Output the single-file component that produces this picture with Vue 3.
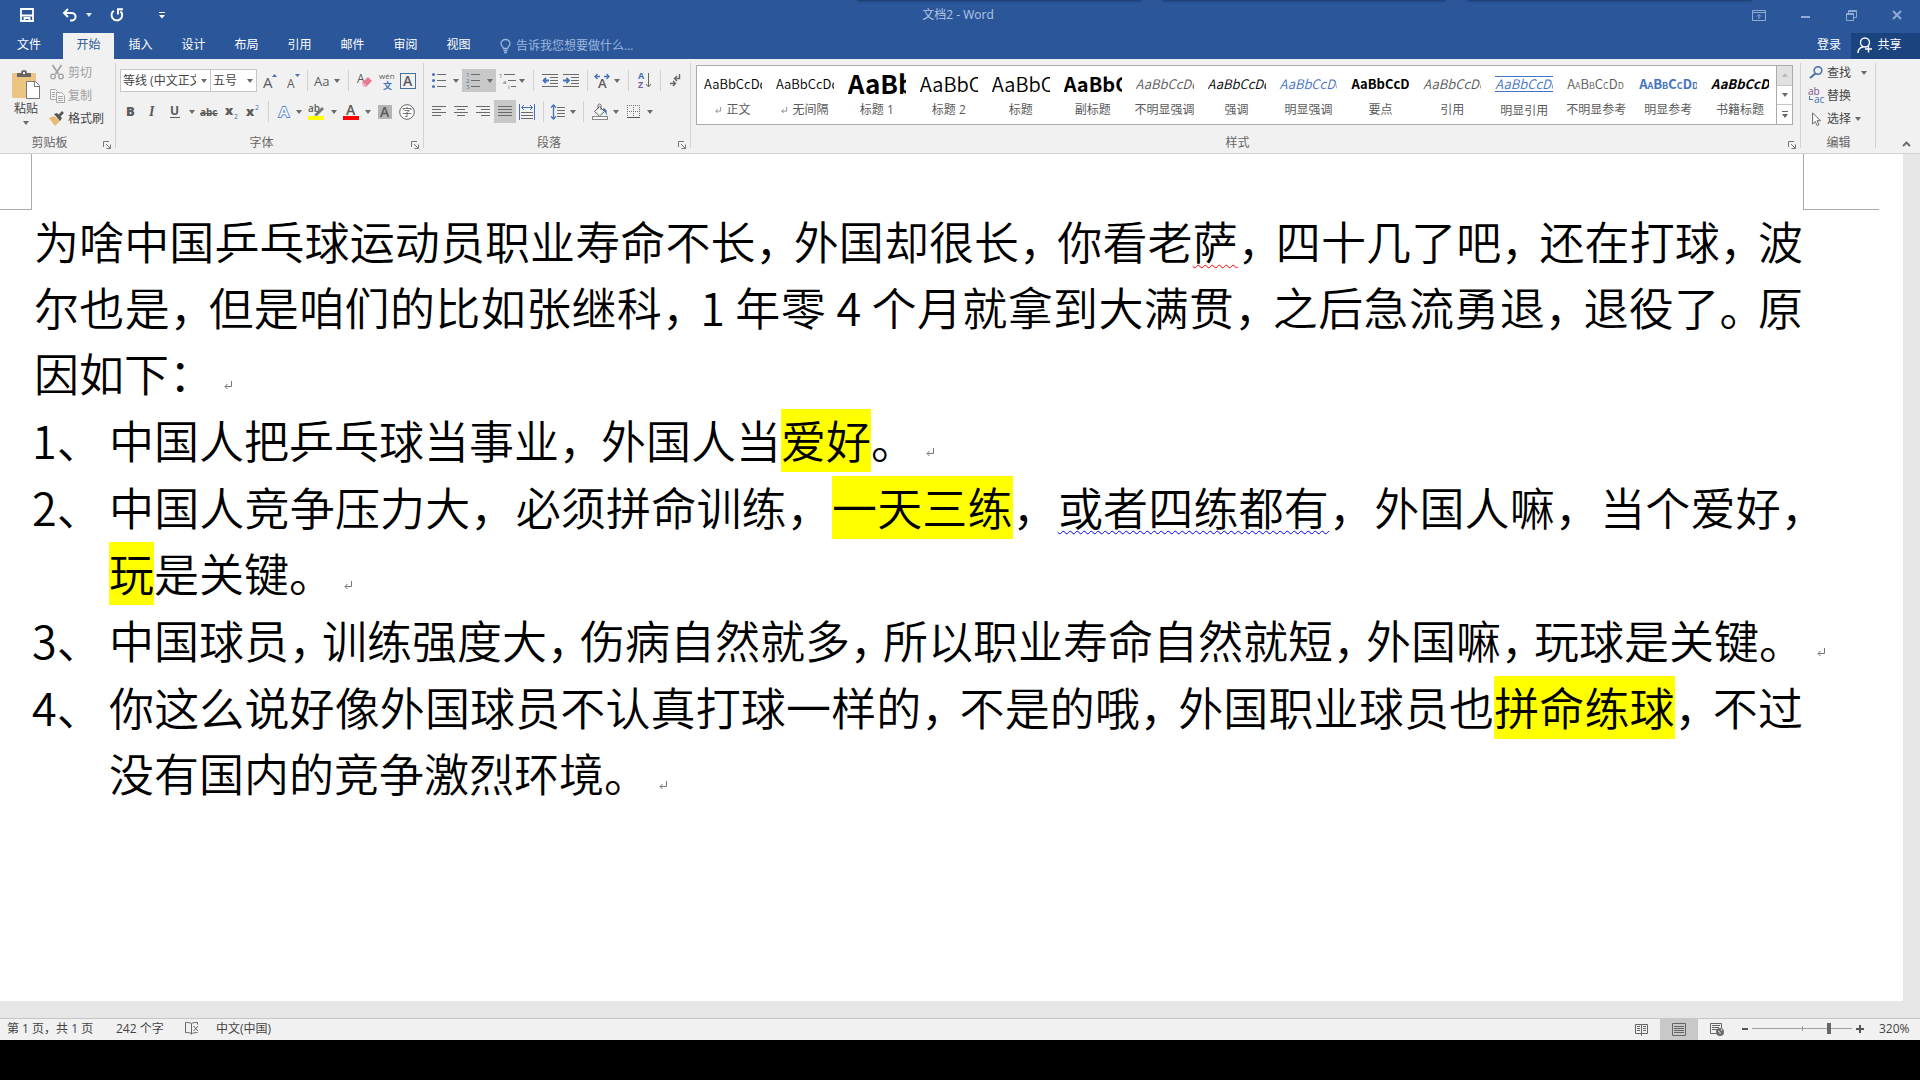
<script setup>
import { ref } from 'vue'

const ink = '#5a5a5a'
const blue = '#4472b4'

const line = (x1, x2, y) => `<path d="M${x1} ${y}.5H${x2}" stroke="#6a6a6a" fill="none"/>`
const letter = (t, x, y, size, extra = '') =>
  `<text x="${x}" y="${y}" font-size="${size}" font-family="'Open Sans','Noto Sans CJK SC',sans-serif" fill="${ink}" ${extra}>${t}</text>`

const icons = {
  arrow: { w: 6, h: 4, body: `<path d="M0 0h6L3 4z" fill="#6a6a6a"/>` },
  sep: { w: 1, h: 21, body: `<path d="M.5 0v21" stroke="#d2d2d2"/>` },
  launcher: { w: 8, h: 8, body: `<path d="M.5 6V.5H6M3 3l4 4M7.500 3.500v4h-4" stroke="#777" fill="none"/>` },
  save: { w: 14, h: 14, body: `<path d="M1 1h12v12H1zM1 7.500h12M4.500 13V10h5v3" stroke="#fff" stroke-width="1.800" fill="none"/>` },
  undo: { w: 15, h: 14, body: `<path d="M2 5h7.500a4 3.700 0 0 1 0 7.500H8M6 1L2 5l4 4" stroke="#fff" stroke-width="2" fill="none"/>` },
  redo: { w: 14, h: 14, body: `<path d="M3.800 2.800A5.300 5.300 0 1 0 10.500 3.300M7 1.200h6M8 1v5.500" stroke="#fff" stroke-width="1.900" fill="none"/>` },
  custom: { w: 6, h: 7, body: `<path d="M0 .5h6" stroke="#fff"/><path d="M0 3h6L3 6.500z" fill="#fff"/>` },
  whiteArrow: { w: 6, h: 4, body: `<path d="M0 0h6L3 4z" fill="#dfe7f3"/>` },
  ribbonOpts: { w: 14, h: 11, body: `<path d="M.5.5h13v10H.5zM.5 2.500h13M7 9V5M5 6.500L7 4.500l2 2" stroke="#8fabd6" fill="none"/>` },
  min: { w: 9, h: 11, body: `<path d="M0 7h9" stroke="#8fabd6" stroke-width="2"/>` },
  restore: { w: 11, h: 11, body: `<path d="M.5 3.500h7v7h-7zM.5 4.500h7M2.500 3V.5h8v7H8M3 1.500h7" stroke="#8fabd6" fill="none"/>` },
  close: { w: 10, h: 10, body: `<path d="M1 1l8 8M9 1L1 9" stroke="#8fabd6" stroke-width="2"/>` },
  bulb: { w: 11, h: 15, body: `<path d="M3.500 9.500C3.500 8 1 7 1 4.800A4.500 4.300 0 0 1 10 4.800C10 7 7.500 8 7.500 9.500zM3.500 11.500h4M4 13.500h3" stroke="#9db6de" stroke-width="1.300" fill="none"/>` },
  share: { w: 16, h: 16, body: `<circle cx="8" cy="5.500" r="4.500" stroke="#fff" stroke-width="1.400" fill="none"/><path d="M1 16c0-3 2-5.500 5-6M11.500 8.500v7M8 12h7" stroke="#fff" stroke-width="1.400" fill="none"/>` },
  paste: { w: 30, h: 32, body: `<rect x="1" y="4" width="24" height="25" rx="1" fill="#ecc583"/><path d="M6 8V4h4a3 3 0 0 1 6 0h4v4z" fill="#666"/><circle cx="13" cy="4" r="1.200" fill="#eee"/><path d="M15.500 12.500h9l4 4v13h-13z" fill="#fff" stroke="#777"/><path d="M23.500 12.500v5h5" stroke="#777" fill="none"/>` },
  cut: { w: 14, h: 15, body: `<path d="M2.500 0l6 9M11.500 0l-6 9" stroke="#a0a0a0" stroke-width="1.700"/><circle cx="3" cy="11.500" r="2.300" stroke="#a0a0a0" stroke-width="1.300" fill="none"/><circle cx="11" cy="11.500" r="2.300" stroke="#a0a0a0" stroke-width="1.300" fill="none"/>` },
  copy: { w: 15, h: 14, body: `<path d="M6 10.500H.5V.5h5l2 2M2 3.500h3M2 5.500h3M2 7.500h3" stroke="#a8a8a8" fill="none"/><path d="M6.500 3.500h5l3 3v7h-8zM8 7.500h5M8 9.500h5M8 11.500h5" stroke="#a8a8a8" fill="#f5f5f5"/>` },
  brush: { w: 16, h: 15, body: `<path d="M0 7l5-2 6 5-5 5z" fill="#e8bb73"/><path d="M5 3l3-1 5 5-2 3z" fill="#555"/><path d="M10 5l4-4" stroke="#555" stroke-width="2.500"/>` },
  growA: { w: 15, h: 16, body: letter('A', 0, 15, 15) + `<path d="M9 4l2.500-3L14 4z" fill="${blue}"/>` },
  shrinkA: { w: 14, h: 15, body: letter('A', 0, 15, 12) + `<path d="M8 1h5l-2.500 3z" fill="${blue}"/>` },
  aa: { w: 16, h: 14, body: letter('Aa', 0, 12, 13) },
  eraser: { w: 15, h: 15, body: letter('A', 0, 10, 12) + `<path d="M5 10l6-6 4 4-6 6H7z" fill="#e8798f"/><path d="M5 10l2 4h2l1-1-4-4z" fill="#f3b3bd"/>` },
  wen: { w: 16, h: 18, body: letter('wén', 0, 7, 8) + letter('文', 4, 17, 9, `style="fill:${blue};font-weight:700"`) },
  boxA: { w: 16, h: 16, body: `<rect x=".5" y=".5" width="15" height="15" stroke="#41719c" fill="none"/>` + letter('A', 3, 13, 14, 'font-weight="600"') },
  bold: { w: 9, h: 13, body: letter('B', 0, 11, 13, 'font-weight="800"') },
  italic: { w: 9, h: 13, body: `<text x="1" y="11" font-size="14" font-family="'Liberation Serif',serif" font-style="italic" font-weight="700" fill="${ink}">I</text>` },
  underline: { w: 10, h: 14, body: letter('U', 0, 10, 12, 'font-weight="700"') + `<path d="M0 12.500h10" stroke="${ink}"/>` },
  strike: { w: 18, h: 12, body: letter('abc', 0, 10, 10, 'font-weight="700"') + `<path d="M0 7.500h18" stroke="${ink}"/>` },
  sub: { w: 13, h: 14, body: letter('x', 0, 10, 13, 'font-weight="800"') + letter('2', 9, 14, 7, `style="fill:${blue}"`) },
  sup: { w: 13, h: 16, body: letter('x', 0, 12, 13, 'font-weight="800"') + letter('2', 9, 6, 7, `style="fill:${blue}"`) },
  effectA: { w: 14, h: 15, body: `<text x="2" y="13" font-size="15" font-family="'Open Sans',sans-serif" font-weight="600" fill="#fff" stroke="#5b8bd0" stroke-width="2" paint-order="stroke">A</text>` },
  marker: { w: 17, h: 18, body: letter('ab', 0, 9, 10, 'font-weight="600"') + `<path d="M6 12l8-8 2 2-7 7z" fill="#777"/><rect x="0" y="13" width="16" height="4" fill="#ff0"/>` },
  colorA: { w: 16, h: 16, body: letter('A', 3, 11, 14, 'font-weight="600"') + `<rect y="12" width="16" height="4" fill="#f00"/>` },
  shadeA: { w: 14, h: 14, body: `<rect width="14" height="14" fill="#b4b4b4"/>` + letter('A', 2, 12, 14, 'font-weight="600"') },
  circleZi: { w: 16, h: 16, body: `<circle cx="8" cy="8" r="7.300" stroke="#666" fill="#fff"/>` + letter('字', 3, 12, 10) },
  bullets: { w: 14, h: 15, body: [1, 7, 13].map(y => `<circle cx="1.500" cy="${y + .5}" r="1.500" fill="${blue}"/>` + line(5, 14, y)).join('') },
  numbers: { w: 14, h: 17, body: [1, 2, 3].map((n, i) => letter(n, 0, 5 + i * 6, 6, `style="fill:${blue}"`) + line(5, 14, 2 + i * 6)).join('') },
  multi: { w: 17, h: 16, body: letter('1', 0, 5, 6) + letter('a', 4, 11, 6) + letter('i', 9, 16, 6) + line(5, 16, 1) + line(9, 17, 7) + line(12, 17, 13) },
  outdent: { w: 16, h: 13, body: line(0, 16, 0) + line(8, 16, 3) + line(8, 16, 6) + line(8, 16, 9) + line(0, 16, 12) + `<path d="M7 6.500H2M4 4L1.500 6.500 4 9" stroke="${blue}" stroke-width="1.800" fill="none"/>` },
  indent: { w: 16, h: 13, body: line(0, 16, 0) + line(8, 16, 3) + line(8, 16, 6) + line(8, 16, 9) + line(0, 16, 12) + `<path d="M0 6.500h5M3.500 4L6 6.500 3.500 9" stroke="${blue}" stroke-width="1.800" fill="none"/>` },
  asian: { w: 16, h: 14, body: letter('A', 4, 14, 13, 'font-weight="600"') + `<path d="M6 2.500H1M3.500 0L1 2.500 3.500 5M10 2.500h5M12.500 0L15 2.500 12.500 5" stroke="${blue}" stroke-width="1.300" fill="none"/>` },
  sort: { w: 14, h: 17, body: letter('A', 0, 7, 9, `style="fill:${blue};font-weight:700"`) + letter('Z', 0, 16, 9, 'style="fill:#8064a2;font-weight:700"') + `<path d="M10.500 1v14M8 12l2.500 3 2.500-3" stroke="#666" fill="none"/>` },
  marks: { w: 12, h: 14, body: `<path d="M9.500 0v4.500H5M7 2L4.500 4.500 7 7M0 9.500h5M3 7L5.500 9.500 3 12" stroke="#666" stroke-width="1.400" fill="none"/>` },
  left: { w: 14, h: 13, body: line(0, 14, 1) + line(0, 9, 4) + line(0, 14, 7) + line(0, 9, 10) },
  center: { w: 14, h: 13, body: line(0, 14, 1) + line(3, 11, 4) + line(0, 14, 7) + line(3, 11, 10) },
  right: { w: 14, h: 13, body: line(0, 14, 1) + line(5, 14, 4) + line(0, 14, 7) + line(5, 14, 10) },
  justify: { w: 14, h: 13, body: line(0, 14, 1) + line(0, 14, 4) + line(0, 14, 7) + line(0, 14, 10) },
  distribute: { w: 16, h: 16, body: `<path d="M.5 0v16M15.500 0v16M3 3.500h10M5 1L2.500 3.500 5 6M11 1l2.500 2.500L11 6" stroke="${blue}" fill="none"/>` + line(2, 14, 8) + line(2, 14, 11) + line(2, 14, 14) },
  spacing: { w: 14, h: 16, body: `<path d="M2.500 1v14M0 3.500L2.500 1 5 3.500M0 12.500L2.500 15 5 12.500" stroke="${blue}" stroke-width="1.300" fill="none"/>` + line(6, 14, 3) + line(6, 14, 6) + line(6, 14, 9) + line(6, 14, 12) },
  bucket: { w: 17, h: 16, body: `<path d="M2.500 7.500l5-5 5 5-5 4.500zM6 5V1.500a1.500 1.500 0 0 1 3 0V6" stroke="#666" fill="none"/><path d="M11 4c4 1 4 3 3.500 8-1-3-1-4-3-5z" fill="${blue}"/><rect x=".5" y="12.500" width="15" height="3" fill="#fff" stroke="#888"/>` },
  borders: { w: 13, h: 13, body: `<path d="M.5 0v12M6.500 0v12M12.500 0v12M0 .5h13M0 6.500h13" stroke="#777" stroke-dasharray="1 1"/><path d="M0 12.500h13" stroke="#555"/>` },
  find: { w: 14, h: 13, body: `<circle cx="9" cy="4.500" r="3.800" stroke="${blue}" stroke-width="1.600" fill="none"/><path d="M6.500 7.500L1 12" stroke="${blue}" stroke-width="2.200"/>` },
  replace: { w: 17, h: 17, body: letter('ab', 0, 8, 10, 'style="fill:#7a4f87"') + letter('ac', 6, 16, 10, `style="fill:${blue}"`) + `<path d="M1.500 9v3.500H5" stroke="${blue}" fill="none"/>` },
  pick: { w: 9, h: 14, body: `<path d="M.6 1v11l2.600-2.500 2 4 1.800-.8-2-4h3.500z" stroke="#666" fill="#fff"/>` },
  chevron: { w: 9, h: 6, body: `<path d="M1 5l3.500-3.500L8 5" stroke="#666" stroke-width="1.800" fill="none"/>` },
  ret: { w: 8, h: 8, body: `<path d="M7.500 0v5.500H1M3.500 3L1 5.500 3.500 8" stroke="#777" fill="none"/>` },
  proof: { w: 15, h: 13, body: `<path d="M6.500 1.500C5 .5 3 .5.5.5v10c2.500 0 4.500 0 6 1.500zM6.500 1.500C8 .5 10 .5 12.500.5v2M6.500 12c1-1 3-1.500 6-1.500M8.500 4l4.500 5M13 4L8.500 9" stroke="#666" fill="none"/>` },
  read: { w: 13, h: 13, body: `<path d="M6.500 1.500h-6v9h6l0 2 0-2h6v-9h-6v9M2 3.500h3M2 5.500h3M2 7.500h3M8 3.500h3M8 5.500h3M8 7.500h3" stroke="#666" fill="none"/>` },
  print: { w: 14, h: 13, body: `<path d="M.5.5h13v12H.5zM2 3.500h10M2 5.500h10M2 7.500h10M2 9.500h10" stroke="#666" fill="none"/>` },
  web: { w: 15, h: 14, body: `<path d="M6 10.500H.5V.5h11V5M2 2.500h8M2 4.500h7M2 6.500h5" stroke="#666" fill="none"/><circle cx="10" cy="9" r="4" fill="#6a6a6a"/><path d="M8 8l2 1v2M11 6l1 2" stroke="#ddd" fill="none"/>` },
  minus: { w: 6, h: 8, body: `<path d="M0 4h6" stroke="#555" stroke-width="2"/>` },
  plus: { w: 8, h: 8, body: `<path d="M0 4h8M4 0v8" stroke="#555" stroke-width="2"/>` }
}

const tools = list => list.map(([icon, w, label, on]) => ({ icon, w, label, on }))

const fontRow1 = tools([
  ['growA', 27, '增大字号'], ['shrinkA', 20, '减小字号'], ['sep', 7], ['aa', 22, '更改大小写'], ['arrow', 8, '大小写选项'],
  ['sep', 14], ['eraser', 19, '清除格式'], ['wen', 25, '拼音指南'], ['boxA', 18, '字符边框']
])
const fontRow2 = tools([
  ['bold', 21, '加粗'], ['italic', 22, '倾斜'], ['underline', 24, '下划线'], ['arrow', 9, '下划线选项'], ['strike', 25, '删除线'],
  ['sub', 21, '下标'], ['sup', 21, '上标'], ['sep', 10], ['effectA', 22, '文本效果'], ['arrow', 7, '文本效果选项'],
  ['marker', 29, '突出显示'], ['arrow', 6, '突出显示选项'], ['colorA', 27, '字体颜色'], ['arrow', 7, '字体颜色选项'],
  ['shadeA', 27, '字符底纹'], ['circleZi', 17, '带圈字符']
])
const paraRow1 = tools([
  ['bullets', 22, '项目符号'], ['arrow', 12, '项目符号选项'], ['numbers', 22, '编号', true], ['arrow', 12, '编号选项', true],
  ['multi', 23, '多级列表'], ['arrow', 6, '多级列表选项'], ['sep', 16], ['outdent', 17, '减少缩进量'], ['indent', 26, '增加缩进量'],
  ['sep', 7], ['asian', 22, '中文版式'], ['arrow', 7, '中文版式选项'], ['sep', 17], ['sort', 16, '排序'], ['sep', 14], ['marks', 17, '显示编辑标记']
])
const paraRow2 = tools([
  ['left', 22, '左对齐'], ['center', 22, '居中'], ['right', 22, '右对齐'], ['justify', 22, '两端对齐', true], ['distribute', 22, '分散对齐'],
  ['sep', 10], ['spacing', 20, '行距'], ['arrow', 10, '行距选项'], ['sep', 11], ['bucket', 23, '底纹'], ['arrow', 8, '底纹选项'],
  ['borders', 27, '边框'], ['arrow', 6, '边框选项']
])

const tabs = ['插入', '设计', '布局', '引用', '邮件', '审阅', '视图']

const styles = [
  { name: '正文', text: 'AaBbCcDd', cls: '', mark: true },
  { name: '无间隔', text: 'AaBbCcDd', cls: '', mark: true },
  { name: '标题 1', text: 'AaBb', cls: 'h1' },
  { name: '标题 2', text: 'AaBbC', cls: 'h2' },
  { name: '标题', text: 'AaBbC', cls: 'h2' },
  { name: '副标题', text: 'AaBbC', cls: 'h2 strong' },
  { name: '不明显强调', text: 'AaBbCcDd', cls: 'it grey' },
  { name: '强调', text: 'AaBbCcDd', cls: 'it' },
  { name: '明显强调', text: 'AaBbCcDd', cls: 'it blue' },
  { name: '要点', text: 'AaBbCcD', cls: 'strong' },
  { name: '引用', text: 'AaBbCcDd', cls: 'it grey' },
  { name: '明显引用', text: 'AaBbCcDd', cls: 'it blue ruled' },
  { name: '不明显参考', text: 'AaBbCcDd', cls: 'caps grey' },
  { name: '明显参考', text: 'AaBbCcDd', cls: 'caps blue strong' },
  { name: '书籍标题', text: 'AaBbCcD', cls: 'it strong' }
]

// Document markup: [x] highlight, {x} spelling wave, <x> grammar wave.
const source = [
  { lines: [
    { t: '为啥中国乒乓球运动员职业寿命不长，外国却很长，你看老{萨}，四十几了吧，还在打球，波', fit: 'full' },
    { t: '尔也是，但是咱们的比如张继科，1 年零 4 个月就拿到大满贯，之后急流勇退，退役了。原', fit: 'full' },
    { t: '因如下：', end: true }
  ] },
  { num: '1、', lines: [{ t: '中国人把乒乓球当事业，外国人当[爱好]。', end: true }] },
  { num: '2、', lines: [
    { t: '中国人竞争压力大，必须拼命训练，[一天三练]，<或者四练都有>，外国人嘛，当个爱好，', fit: 'full loose' },
    { t: '[玩]是关键。', end: true }
  ] },
  { num: '3、', lines: [{ t: '中国球员，训练强度大，伤病自然就多，所以职业寿命自然就短，外国嘛，玩球是关键。', fit: 'tight', end: true }] },
  { num: '4、', lines: [
    { t: '你这么说好像外国球员不认真打球一样的，不是的哦，外国职业球员也[拼命练球]，不过', fit: 'full' },
    { t: '没有国内的竞争激烈环境。', end: true }
  ] }
]
const kinds = { '[': 'hl', '{': 'spell', '<': 'grammar' }
const split = t => t.match(/\[[^\]]+\]|\{[^}]+\}|<[^>]+>|[，。：]|[^[{<，。：]+/g).map(s => {
  if (kinds[s[0]]) return { k: kinds[s[0]], s: s.slice(1, -1) }
  return { k: /^[，。：]$/.test(s) ? 'punct' : 'run', s }
})
const paras = source.map(p => ({ ...p, lines: p.lines.map(l => ({ ...l, parts: split(l.t) })) }))

const font = ref('等线')
const size = ref('五号')
const zoom = ref(78)
</script>

<template>
  <div class="app">
    <header class="top">
      <div class="shades" aria-hidden="true"><i></i><i></i><i></i></div>
      <div class="titlebar">
        <div class="quick">
          <button v-for="q in [['save', 50, '保存'], ['undo', 34, '撤消'], ['whiteArrow', 5, '撤消选项'], ['redo', 51, '重复'], ['custom', 40, '自定义']]"
            :key="q[0]" :style="{ width: q[1] + 'px' }" :aria-label="q[2]">
            <svg :width="icons[q[0]].w" :height="icons[q[0]].h" v-html="icons[q[0]].body"></svg>
          </button>
        </div>
        <div class="title">文档2 - Word</div>
        <div class="win">
          <button v-for="q in [['ribbonOpts', '功能区显示选项'], ['min', '最小化'], ['restore', '还原'], ['close', '关闭']]" :key="q[0]" :aria-label="q[1]">
            <svg :width="icons[q[0]].w" :height="icons[q[0]].h" v-html="icons[q[0]].body"></svg>
          </button>
        </div>
      </div>
      <nav class="tabs">
        <button class="file">文件</button>
        <button class="active">开始</button>
        <button v-for="t in tabs" :key="t">{{ t }}</button>
        <label class="tell">
          <svg :width="icons.bulb.w" :height="icons.bulb.h" v-html="icons.bulb.body"></svg>
          <input type="text" placeholder="告诉我您想要做什么..." aria-label="告诉我您想要做什么">
        </label>
        <button class="login">登录</button>
        <button class="share">
          <svg :width="icons.share.w" :height="icons.share.h" v-html="icons.share.body"></svg>共享
        </button>
      </nav>
    </header>

    <section class="ribbon">
      <div class="group clipboard">
        <div class="body">
          <button class="paste">
            <svg :width="icons.paste.w" :height="icons.paste.h" v-html="icons.paste.body"></svg>
            <span>粘贴</span>
            <svg class="drop" width="6" height="4" v-html="icons.arrow.body"></svg>
          </button>
          <div class="stack">
            <button v-for="q in [['cut', '剪切', true], ['copy', '复制', true], ['brush', '格式刷', false]]" :key="q[0]" :class="{ dim: q[2] }">
              <span class="slot"><svg :width="icons[q[0]].w" :height="icons[q[0]].h" v-html="icons[q[0]].body"></svg></span>{{ q[1] }}
            </button>
          </div>
        </div>
        <footer><span>剪贴板</span><button class="launch" aria-label="剪贴板选项"><svg width="8" height="8" v-html="icons.launcher.body"></svg></button></footer>
      </div>

      <div class="group fonts">
        <div class="rows">
          <div class="row">
            <span class="combo wide">
              <select v-model="font" aria-label="字体"><option value="等线">等线 (中文正文)</option></select>
              <svg width="6" height="4" v-html="icons.arrow.body"></svg>
            </span>
            <span class="combo">
              <select v-model="size" aria-label="字号"><option>五号</option></select>
              <svg width="6" height="4" v-html="icons.arrow.body"></svg>
            </span>
            <component :is="t.label ? 'button' : 'span'" v-for="(t, i) in fontRow1" :key="i" class="tool" :style="{ width: t.w + 'px' }" :aria-label="t.label">
              <svg :width="icons[t.icon].w" :height="icons[t.icon].h" v-html="icons[t.icon].body"></svg>
            </component>
          </div>
          <div class="row">
            <component :is="t.label ? 'button' : 'span'" v-for="(t, i) in fontRow2" :key="i" class="tool" :style="{ width: t.w + 'px' }" :aria-label="t.label">
              <svg :width="icons[t.icon].w" :height="icons[t.icon].h" v-html="icons[t.icon].body"></svg>
            </component>
          </div>
        </div>
        <footer><span>字体</span><button class="launch" aria-label="字体选项"><svg width="8" height="8" v-html="icons.launcher.body"></svg></button></footer>
      </div>

      <div class="group para">
        <div class="rows">
          <div v-for="(r, n) in [paraRow1, paraRow2]" :key="n" class="row">
            <component :is="t.label ? 'button' : 'span'" v-for="(t, i) in r" :key="i" class="tool" :class="{ on: t.on }" :style="{ width: t.w + 'px' }" :aria-label="t.label">
              <svg :width="icons[t.icon].w" :height="icons[t.icon].h" v-html="icons[t.icon].body"></svg>
            </component>
          </div>
        </div>
        <footer><span>段落</span><button class="launch" aria-label="段落选项"><svg width="8" height="8" v-html="icons.launcher.body"></svg></button></footer>
      </div>

      <div class="group gallery-group">
        <div class="gallery">
          <button v-for="s in styles" :key="s.name" class="style">
            <span class="preview" :class="s.cls">{{ s.text }}</span>
            <span class="name"><svg v-if="s.mark" width="6" height="8" viewBox="0 0 8 8" v-html="icons.ret.body"></svg>{{ s.name }}</span>
          </button>
          <div class="scroll">
            <button class="off" aria-label="向上"><svg width="6" height="4"><path d="M0 4h6L3 0z" fill="#bbb" /></svg></button>
            <button aria-label="向下"><svg width="6" height="4" v-html="icons.arrow.body"></svg></button>
            <button aria-label="更多"><svg width="6" height="7"><path d="M0 .5h6" stroke="#666" /><path d="M0 3h6L3 7z" fill="#666" /></svg></button>
          </div>
        </div>
        <footer><span>样式</span><button class="launch" aria-label="样式选项"><svg width="8" height="8" v-html="icons.launcher.body"></svg></button></footer>
      </div>

      <div class="group edit">
        <div class="stack">
          <button v-for="q in [['find', '查找', 'far'], ['replace', '替换', ''], ['pick', '选择', 'near']]" :key="q[0]">
            <span class="slot"><svg :width="icons[q[0]].w" :height="icons[q[0]].h" v-html="icons[q[0]].body"></svg></span>{{ q[1] }}
            <svg v-if="q[2]" :class="q[2]" width="6" height="4" v-html="icons.arrow.body"></svg>
          </button>
        </div>
        <footer><span>编辑</span></footer>
      </div>
      <button class="collapse" aria-label="折叠功能区"><svg width="9" height="6" v-html="icons.chevron.body"></svg></button>
    </section>

    <main class="desk">
      <article class="page">
        <div class="corners" aria-hidden="true"><i></i><i></i></div>
        <div v-for="(p, i) in paras" :key="i" class="para-block">
          <span v-if="p.num" class="num">{{ p.num }}</span>
          <div class="text">
            <div v-for="(l, j) in p.lines" :key="j" class="line" :class="l.fit"><span v-for="(s, k) in l.parts" :key="k" :class="s.k">{{ s.s }}</span><svg v-if="l.end" class="ret" width="8" height="8" v-html="icons.ret.body"></svg></div>
          </div>
        </div>
      </article>
    </main>

    <footer class="status">
      <span class="pages">第 1 页，共 1 页</span>
      <span class="words">242 个字</span>
      <svg class="proof" width="15" height="13" v-html="icons.proof.body"></svg>
      <span class="lang">中文(中国)</span>
      <div class="views">
        <button v-for="q in [['read', '阅读视图'], ['print', '页面视图'], ['web', 'Web 版式']]" :key="q[0]" :class="{ on: q[0] === 'print' }" :aria-label="q[1]">
          <svg :width="icons[q[0]].w" :height="icons[q[0]].h" v-html="icons[q[0]].body"></svg>
        </button>
      </div>
      <button aria-label="缩小"><svg width="6" height="8" v-html="icons.minus.body"></svg></button>
      <input v-model="zoom" class="zoom" type="range" min="0" max="100" aria-label="缩放">
      <button aria-label="放大"><svg width="8" height="8" v-html="icons.plus.body"></svg></button>
      <span class="pct">320%</span>
    </footer>
    <div class="below"></div>
  </div>
</template>

<style>
body { margin: 0; background: #000; }
</style>

<style scoped>
.app {
  min-height: 100vh;
  display: flex;
  flex-direction: column;
  font: 12px/16px "Open Sans", "Noto Sans CJK SC", sans-serif;
  color: #444;
  background: #e6e6e6;
}
button {
  border: 0;
  padding: 0;
  margin: 0;
  background: none;
  font: inherit;
  color: inherit;
  display: flex;
  align-items: center;
  justify-content: center;
  white-space: nowrap;
}
svg { flex: none; overflow: visible; }

.top { background: #2b579a; color: #fff; position: relative; }
.shades { position: absolute; inset: 0 168px auto 857px; display: flex; gap: 22px; }
.shades i { flex: 1; height: 1px; background: #1f4178; box-shadow: 0 1px 2px #1f4178; }
.titlebar { height: 33px; display: flex; align-items: center; justify-content: space-between; padding-bottom: 3px; box-sizing: border-box; position: relative; }
.quick { display: flex; padding-left: 2px; }
.title { position: absolute; left: 0; right: 4px; text-align: center; color: #b3c6e4; pointer-events: none; }
.win { display: flex; }
.win button { width: 46px; }
.tabs { height: 26px; display: flex; align-items: stretch; }
.tabs button { width: 53px; padding-bottom: 2px; }
.tabs .file { width: 58px; margin-right: 5px; }
.tabs .active { width: 51px; background: #f1f1f1; color: #2b579a; }
.tell { display: flex; align-items: center; gap: 5px; margin-left: 15px; flex: 1; }
.tell input { border: 0; padding: 0; background: none; font: inherit; color: #fff; width: 160px; outline: 0; }
.tell input::placeholder { color: #9db6de; opacity: 1; }
.tabs .login { width: 44px; }
.tabs .share { width: 69px; gap: 4px; background: #1b437e; padding-right: 12px; box-sizing: border-box; }

.ribbon { height: 94px; background: #f1f1f1; border-bottom: 1px solid #d2d2d2; display: flex; }
.group { display: flex; flex-direction: column; box-sizing: border-box; position: relative; }
.group::after { content: ""; position: absolute; right: 0; top: 4px; bottom: 5px; width: 1px; background: #d2d2d2; }
.group > footer { margin-top: auto; height: 21px; display: flex; align-items: center; color: #666; }
.group > footer span { flex: 1; text-align: center; }
.launch { width: 17px; height: 20px; padding: 4px 2px 0 0; box-sizing: border-box; }
.clipboard { width: 116px; }
.body { display: flex; }
.paste { width: 46px; flex-direction: column; padding: 5px 0 0 6px; box-sizing: border-box; }
.paste .drop { margin-top: 4px; }
.stack { display: flex; flex-direction: column; padding-top: 2px; }
.stack button { height: 23px; justify-content: flex-start; }
.stack .dim { color: #a0a0a0; }
.slot { width: 22px; display: flex; justify-content: center; }
.fonts { width: 308px; }
.para { width: 267px; }
.rows { display: flex; flex-direction: column; gap: 8px; padding: 10px 0 0 4px; }
.row { display: flex; height: 23px; }
.tool { display: flex; flex: none; align-items: center; justify-content: center; }
.tool.on { background: #c8c8c8; }
.combo { position: relative; width: 47px; margin-left: -1px; flex: none; display: flex; }
.combo.wide { width: 91px; margin-left: 0; }
.combo select {
  appearance: none;
  width: 100%;
  border: 1px solid #c6c6c6;
  border-radius: 0;
  background: #fff;
  font: inherit;
  color: #444;
  padding: 0 14px 0 2px;
}
.combo svg { position: absolute; right: 4px; top: 10px; }

.gallery-group { flex: 1; min-width: 0; }
.gallery { display: flex; margin: 6px 8px 0 5px; height: 60px; box-sizing: border-box; border: 1px solid #ababab; background: #fff; overflow: hidden; }
.style { flex: 1 1 72px; min-width: 0; flex-direction: column; }
.preview { width: 58px; height: 30px; line-height: 30px; overflow: hidden; text-align: left; font-family: "Noto Sans CJK SC", sans-serif; font-size: 13px; font-weight: 350; color: #000; }
.name { height: 22px; line-height: 18px; display: flex; align-items: center; gap: 5px; color: #5a5a5a; }
.h1 { font-size: 26px; font-weight: 700; line-height: 28px; }
.h2 { font-size: 20px; }
.strong { font-weight: 700; }
.it { font-style: italic; }
.grey { color: #595959; }
.blue { color: #4472c4; }
.caps { font-variant: small-caps; }
.ruled { height: 14px; line-height: 14px; margin: 8px 0; border: solid #4472c4; border-width: 1px 0; }
.scroll { width: 15px; flex: none; display: flex; flex-direction: column; border-left: 1px solid #ababab; }
.scroll button { flex: 1; }
.scroll button + button { border-top: 1px solid #c6c6c6; }
.scroll .off { background: #e1e1e1; }
.edit { width: 75px; }
.edit .stack { padding-left: 4px; }
.far { margin-left: 10px; }
.near { margin-left: 4px; }
.collapse { flex: 1 0 44px; max-width: 44px; align-items: flex-end; padding: 0 0 6px 16px; box-sizing: border-box; }

.desk { flex: 1; display: flex; padding: 0 17px 17px 0; }
.page {
  flex: 1;
  min-width: 0;
  position: relative;
  background: #fff;
  padding: 54px 100px 0 34px;
  color: #000;
  font-family: "Noto Sans CJK SC", sans-serif;
  font-size: 45px;
  font-weight: 350;
  line-height: 66px;
}
.corners { position: absolute; inset: 0 24px auto 0; display: flex; justify-content: space-between; }
.corners i { width: 31px; height: 55px; border: solid #ababab; border-width: 0 1px 1px 0; }
.corners i + i { width: 75px; border-width: 0 0 1px 1px; }
.para-block { display: flex; margin-bottom: 1px; }
.num { width: 77px; margin-left: -2px; flex: none; white-space: nowrap; }
.text { flex: 1; min-width: 0; }
.line { white-space: nowrap; height: 66px; }
.full { text-align: justify; text-align-last: justify; }
.punct { display: inline-block; width: 42px; text-align: left; text-align-last: left; }
.full .punct { width: 38px; }
.loose .punct { width: 45px; }
.loose .punct:last-child { width: 22px; }
.tight .punct { width: 33px; }
.tight .punct:nth-last-child(2) { width: 45px; }
.hl { background: linear-gradient(#ff0, #ff0) 0 2px / 100% 63px no-repeat; }
.spell, .grammar { text-decoration: underline wavy 1px; text-underline-offset: 4px; text-decoration-skip-ink: none; }
.spell { text-decoration-color: #f00; }
.grammar { text-decoration-color: #00f; }
.ret { margin-left: 13px; vertical-align: 3px; }

.status { height: 22px; box-sizing: border-box; border-top: 1px solid #c6c6c6; background: #f1f1f1; display: flex; align-items: center; padding: 0 0 2px 7px; }
.pages { width: 109px; }
.words { width: 69px; }
.proof { margin-right: 16px; }
.views { margin: 0 0 -2px auto; display: flex; align-self: stretch; padding-right: 6px; }
.views button { width: 38px; }
.views .on { background: #c8c8c8; }
.zoom {
  appearance: none;
  width: 100px;
  height: 12px;
  margin: 0 4px;
  background:
    linear-gradient(#a0a0a0, #a0a0a0) 50% 50% / 1px 5px no-repeat,
    linear-gradient(#a0a0a0, #a0a0a0) 0 50% / 100% 1px no-repeat;
}
.zoom::-webkit-slider-thumb { appearance: none; width: 4px; height: 11px; background: #666; }
.pct { width: 41px; margin-left: 15px; }
.below { height: 40px; background: #000; }
</style>
